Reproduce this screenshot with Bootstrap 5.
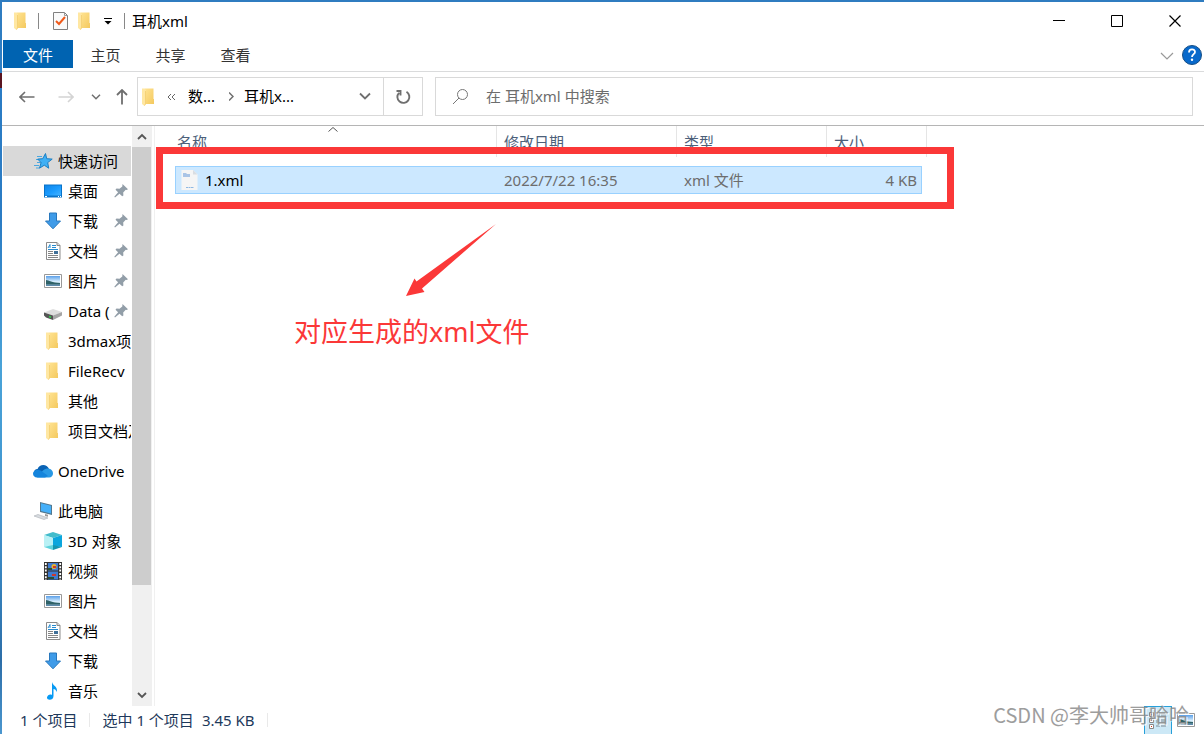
<!DOCTYPE html>
<html lang="zh-CN">
<head>
<meta charset="utf-8">
<meta name="viewport" content="width=device-width, initial-scale=1">
<title>耳机xml</title>
<link href="https://cdn.jsdelivr.net/npm/bootstrap@5.3.0/dist/css/bootstrap.min.css" rel="stylesheet">
<style>
  body { font-family: "Noto Sans", "Noto Sans CJK SC", sans-serif; font-size: 15px; line-height: 20px; color: #000;
    background: linear-gradient(#2f7cc0, #2f7fc4 10%, #5a1420 10%, #5a1420 12%, #2b7cc4 12%, #2b7cc4 30%, #4aa3d8 50%, #3f94cf 70%, #2d6ea8 90%, #4b97cf); }
  button { border: 0; background: none; padding: 0; color: inherit; }
  a { color: inherit; text-decoration: none; }
  svg { display: block; flex: none; }
  .explorer { padding: 2px 0 0 2px; }
  .explorer::before { content: ""; position: absolute; inset: 0 0 auto 0; height: 2px; background: #2f7cc0; }
  .pane { background: #fff; }
  .titlebar { height: 38px; padding-left: 7px; }
  .tool { height: 38px; width: 24px; display: flex; align-items: center; justify-content: center; }
  .tool-wide { width: 32px; }
  .tool-slim { width: 18px; }
  .tool-caret { width: 28px; }
  .rule { width: 1px; height: 16px; background: #888; margin: 0 5px; }
  .rule-end { margin: 0 7px 0 2px; }
  .sysbtn { width: 58px; height: 38px; display: flex; align-items: center; justify-content: center; }
  .ribbon { height: 32px; padding-left: 1px; border-bottom: 1px solid #dadbdc; }
  .tab { width: 65px; height: 28px; line-height: 30px; color: #333; }
  .tab-file { width: 70px; background: #0063b1; color: #fff; }
  .help { margin: 0 2px 2px 0; }
  .locbar { height: 54px; padding: 5px 11px 0 5px; border-bottom: 1px solid #b5b5b5; }
  .navbtn { width: 39px; height: 39px; display: flex; align-items: center; justify-content: center; }
  .navbtn.narrow { width: 21px; }
  .navbtn.mid { width: 31px; }
  .boxed { height: 39px; border: 1px solid #d9d9d9; }
  .address { width: 286px; padding-left: 2px; }
  .address button { line-height: 20px; padding-bottom: 2px; }
  .crumb-more { margin: 2px 12px 0 9px; }
  .crumb-next { margin: 0 10px 0 14px; }
  .address .refresh { width: 39px; height: 37px; padding: 0; border-left: 1px solid #d9d9d9; }
  .search { padding-left: 16px; margin-left: 12px; gap: 17px; }
  .search input { border: 0; outline: 0; background: none; min-width: 0; padding: 0 0 2px; }
  .search input::placeholder { color: #6d6d6d; opacity: 1; }
  .side { width: 129px; padding: 20px 0 0 1px; }
  .side a { height: 30px; padding-left: 41px; display: flex; align-items: center; gap: 6px; }
  .side a.root { padding-left: 30px; gap: 5px; }
  .side a.picked { background: #d9d9d9; }
  .side .ico { width: 18px; height: 18px; }
  .side a.root .ico { width: 20px; height: 20px; }
  .side .name { flex: 1; overflow: hidden; white-space: nowrap; }
  .side .pin { width: 14px; height: 14px; margin: 0 3px 0 -5px; }
  .spaced { margin-top: 10px; }
  .scroll { width: 20px; margin-left: 1px; background: #f0f0f0; }
  .scroll button { height: 21px; display: flex; align-items: center; justify-content: center; }
  .thumb { flex: 438; background: #cdcdcd; margin-right: 1px; }
  .rest { flex: 100; }
  .files { border-left: 1px solid #f0f0f0; margin-left: 2px; }
  .list { width: 752px; margin-left: 20px; table-layout: fixed; border-collapse: collapse; }
  .list th { height: 31px; font-weight: 400; color: #4c607a; padding: 0 0 0 7px; position: relative; vertical-align: middle; }
  .list th::after { content: ""; position: absolute; right: 0; top: 0; bottom: 0; border-right: 1px solid #e5e5e5; }
  .list th:first-child { padding-left: 2px; }
  .sort { position: absolute; left: 153px; top: 0; }
  .list td { padding: 9px 0 0; color: #6d6d6d; }
  .slot { height: 28px; background: #cce8ff; border: 1px solid #99d1ff; border-width: 1px 0; display: flex; align-items: center; padding: 0 4px 1px 7px; }
  td:first-child .slot { border-left-width: 1px; color: #000; gap: 7px; padding-left: 5px; }
  td:last-child .slot { border-right-width: 1px; justify-content: flex-end; margin-right: 5px; }
  .frame { position: absolute; left: 1px; top: 21px; width: 798px; height: 62px; border: 7px solid #fb3838; pointer-events: none; }
  .arrow { margin: 26px 0 0 245px; }
  .note { font-size: 27px; line-height: 40px; color: #fb3838; margin: 12px 0 0 139px; }
  .status { height: 28px; color: #1e395b; padding-left: 18px; }
  .status .gap { width: 1px; height: 14px; background: #e9e9e9; margin: 0 12px; }
  .view { width: 28px; height: 28px; display: flex; align-items: center; justify-content: center; }
  .view.on { background: #cce8f6; border: 1px solid #26a0da; border-bottom: 0; }
  .credit { position: absolute; right: 15px; bottom: 5px; font-size: 20px; line-height: 28px; color: #8d8d8d; text-shadow: 1px 1px 0 #fff; pointer-events: none; font-family: "Noto Sans CJK SC", sans-serif; opacity: .85; }
</style>
</head>
<body>
<svg width="0" height="0" class="position-absolute" aria-hidden="true">
  <defs>
    <linearGradient id="gf" x2="1" y2="1"><stop stop-color="#ffe391"/><stop offset="1" stop-color="#f4c95f"/></linearGradient>
    <linearGradient id="gb" x2="1" y2="1"><stop stop-color="#0f86ea"/><stop offset=".55" stop-color="#1b9cff"/><stop offset="1" stop-color="#44b2ff"/></linearGradient>
    <linearGradient id="gs" x2="0" y2="1"><stop stop-color="#5a9fe8"/><stop offset=".6" stop-color="#e1f4ff"/><stop offset="1" stop-color="#4a7ba0"/></linearGradient>
  </defs>
  <symbol id="folder" viewBox="0 0 18 18"><path d="M5 .5h8.500V11h.5v5H5z" fill="url(#gf)"/><path d="M2 .5h3l1 2.500v13l-1.500 2L2 16z" fill="#ffe7a2"/><path d="M5.500 3v13l-1 1.500" fill="none" stroke="#efc45c" stroke-width=".6"/></symbol>
  <symbol id="desktop" viewBox="0 0 18 18"><path d="M0 2.500h18v13H0z" fill="#0873c9"/><path d="M1 3.500h16v10H1z" fill="url(#gb)"/><path d="M1 14.500h2m11 0h1m1 0h1" stroke="#fff"/></symbol>
  <symbol id="down" viewBox="0 0 18 18"><path d="M5.500 1h7v8h4L9 16.800 1.500 9h4z" fill="#3f9be8" stroke="#2878bd"/></symbol>
  <symbol id="doc" viewBox="0 0 18 18"><path d="M2.500.5H13l3 3v14H2.500z" fill="#fff" stroke="#8b8b8b"/><path d="M13 .5v3h3" fill="#ddd" stroke="#8b8b8b"/><path d="m4 6 2-3.500V6" stroke="#268bd0" fill="none"/><path d="M8 3.500h4M8 5.500h4M4 7.500h10" stroke="#268bd0"/><path d="M4 9.500h5M4 11.500h5M4 13.500h10M4 15.500h10" stroke="#858585"/><path d="M10 9h4v3h-4z" fill="#3f6f98"/></symbol>
  <symbol id="pic" viewBox="0 0 18 18"><path d="M.5 2.500h17v13H.5z" fill="#fff" stroke="#999"/><path d="M2 4h14v10H2z" fill="url(#gs)"/><path d="M2 8c3 0 6 3 14 3v1.500H2z" fill="#2f6268"/></symbol>
  <symbol id="drive" viewBox="0 0 18 18"><path d="m0 10.500 9-3.500 9 3-9 3.500z" fill="#dedede"/><path d="m0 10.500 9 3V18l-7-2.500-2-2z" fill="#555"/><path d="m9 13.500 9-3.500v3.500L9 18z" fill="#a5a5a5"/><path d="m5 14.500 2 .8" stroke="#2fd34b" stroke-width="1.500"/></symbol>
  <symbol id="pinned" viewBox="0 0 14 14"><path d="M8.500 0 14 5.300l-1.500.7-.8-.2-2.500 2.800.2 2.800-1.200.9-2.700-2.600L1 13.500l-.7-.7 3.800-4.500L1.500 5.700l1-1.100 3 .2L8.300 2.400z" fill="#929ea8"/></symbol>
  <symbol id="star" viewBox="0 0 20 20"><path d="M4 5.500h5M3 8.500h4M4 11.500h4M1 14.500h5M3 17h3" stroke="#4aa7df"/><path d="m12.500 2.500 1.200 5.200 5.500.4-4.500 3.500 1 5.600-4.400-3-4.800 3 1.600-5.600-3.400-3.500 5-.4z" fill="#3fb0f5" stroke="#1b7fc4"/></symbol>
  <symbol id="cloud" viewBox="0 0 20 20"><path d="M4.500 8c2-5.500 9.500-5.500 11.500 0l-9 7H4C0 14 0 8 4.500 8" fill="#0a63b5"/><path d="M10 9.500c5-4 10-1 10 3 0 2-1.500 4-4 4H4l2-3z" fill="#2999e5"/><path d="M4 16.500c-4 0-5.500-5-2-7 4-2 7 1 13 5.500l-3 1.500z" fill="#1484dc"/></symbol>
  <symbol id="pc" viewBox="0 0 20 20"><path d="m7 1 12 3v10L7 11z" fill="#52788f"/><path d="m8 2.300 10 2.500v7.800L8 10z" fill="#45b0fa"/><path d="m12 13 3 .7v2l-3-.7z" fill="#999"/><path d="m1 15 4-1.500 10 3.500-4 1.500z" fill="#d8dce0" stroke="#b3b8bd" stroke-width=".7"/></symbol>
  <symbol id="cube" viewBox="0 0 18 18"><path d="m0 3 9-3 9 3-9 3z" fill="#43bccb"/><path d="m0 3 9 3v8l-9 1z" fill="#b9f1f5"/><path d="m9 6 9-3v12l-9-1z" fill="#0ba6dd"/><path d="m0 15 9-2v5z" fill="#5fd3dc"/><path d="m18 15-9-2v5z" fill="#1496b0"/></symbol>
  <symbol id="film" viewBox="0 0 18 18"><path d="M0 0h18v18H0z" fill="#333"/><path d="M4 1h10v7.500H4zM4 9.500h10v8H4z" fill="#3e7bd0"/><path d="M1.800 1v17M16.200 1v17" stroke="#fff" stroke-width="1.800" stroke-dasharray="2 1.300"/><circle cx="10" cy="4.500" r="2.500" fill="#e7b52d"/><path d="M4 6h4v2H4zm0 9h6v2H4z" fill="#284f35"/><path d="M9 4h3v2H9zm-1 8h4v2H8z" fill="#ca3931"/></symbol>
  <symbol id="music" viewBox="0 0 18 18"><path d="M8 0c1 4 6.500 5 4.500 10-.3-2-1.500-3-3-3v7c0 5-7 4.500-6.500 1.500.5-2.500 3-3.500 5-2.500V0z" fill="#079af4"/></symbol>
  <symbol id="check" viewBox="0 0 15 18"><path d="M.5.500h11l3 3v14H.5z" fill="#fafafa" stroke="#808080"/><path d="M11.500.5v3h3" fill="none" stroke="#999"/><path d="m3 9 3 3 6-7" fill="none" stroke="#f05a1a" stroke-width="2"/></symbol>
</svg>

<div class="explorer d-flex flex-column min-vh-100 position-relative">
  <header class="pane">
    <div class="titlebar d-flex align-items-center">
      <button class="tool" aria-label="窗口菜单"><svg width="18" height="18"><use href="#folder"/></svg></button>
      <span class="rule"></span>
      <button class="tool tool-wide" aria-label="属性"><svg width="15" height="18"><use href="#check"/></svg></button>
      <button class="tool tool-slim" aria-label="新建文件夹"><svg width="18" height="18"><use href="#folder"/></svg></button>
      <button class="tool tool-caret" aria-label="自定义快速访问工具栏"><svg width="8" height="8" viewBox="0 0 8 8"><path d="M0 1.500h8" stroke="#000"/><path d="M.5 4h7L4 7.500z"/></svg></button>
      <span class="rule rule-end"></span>
      <span>耳机xml</span>
      <button class="sysbtn ms-auto" aria-label="最小化"><svg width="12" height="12" viewBox="0 0 12 12"><path d="M0 5.500h12" stroke="#000"/></svg></button>
      <button class="sysbtn" aria-label="最大化"><svg width="12" height="12" viewBox="0 0 12 12"><path d="M.5.500h11v11H.5z" fill="none" stroke="#000"/></svg></button>
      <button class="sysbtn" aria-label="关闭"><svg width="12" height="12" viewBox="0 0 12 12"><path d="m.5.500 11 11m0-11-11 11" stroke="#000" stroke-width="1.200"/></svg></button>
    </div>
    <nav class="ribbon d-flex">
      <button class="tab tab-file">文件</button>
      <button class="tab">主页</button>
      <button class="tab">共享</button>
      <button class="tab">查看</button>
      <button class="ms-auto me-2" aria-label="展开功能区"><svg width="14" height="8" viewBox="0 0 14 8"><path d="m1 1 6 6 6-6" fill="none" stroke="#999" stroke-width="1.200"/></svg></button>
      <button class="help" aria-label="帮助"><svg width="20" height="20" viewBox="0 0 20 20"><circle cx="10" cy="10" r="9.500" fill="#0869cb" stroke="#174f86"/><path d="M7 7.500c0-4 6-4 6-.5 0 2-3 2.500-3 5" fill="none" stroke="#fff" stroke-width="1.800"/><circle cx="10" cy="14.700" r="1.200" fill="#fff"/></svg></button>
    </nav>
    <div class="locbar d-flex">
      <button class="navbtn" aria-label="后退"><svg width="16" height="12" viewBox="0 0 16 12"><path d="M15.500 6H1m5-5L1 6l5 5" fill="none" stroke="#6f6f6f" stroke-width="1.600"/></svg></button>
      <button class="navbtn" aria-label="前进"><svg width="16" height="12" viewBox="0 0 16 12"><path d="M.5 6H15m-5-5 5 5-5 5" fill="none" stroke="#d4d4d4" stroke-width="1.600"/></svg></button>
      <button class="navbtn narrow" aria-label="最近位置"><svg width="10" height="6" viewBox="0 0 10 6"><path d="m1 .8 4 4 4-4" fill="none" stroke="#6f6f6f" stroke-width="1.500"/></svg></button>
      <button class="navbtn mid" aria-label="上移"><svg width="12" height="16" viewBox="0 0 12 16"><path d="M6 15.500V1M1 6l5-5 5 5" fill="none" stroke="#6f6f6f" stroke-width="1.800"/></svg></button>
      <div class="boxed address d-flex align-items-center">
        <svg width="18" height="18"><use href="#folder"/></svg>
        <button class="crumb-more" aria-label="更多"><svg width="9" height="8" viewBox="0 0 9 8"><path d="M4 1 1 4l3 3m4-6L5 4l3 3" fill="none" stroke="#666"/></svg></button>
        <button>数...</button>
        <svg class="crumb-next" width="5" height="9" viewBox="0 0 5 9"><path d="m0 .5 4 4-4 4" fill="none" stroke="#6f6f6f" stroke-width="1.500"/></svg>
        <button>耳机x...</button>
        <button class="ms-auto me-2 px-1" aria-label="历史地址"><svg width="12" height="8" viewBox="0 0 12 8"><path d="m1 1.500 5 5 5-5" fill="none" stroke="#6f6f6f" stroke-width="1.800"/></svg></button>
        <button class="refresh d-flex align-items-center justify-content-center" aria-label="刷新"><svg width="16" height="16" viewBox="0 0 16 16"><path d="M11.500 2.800A6 6 0 1 1 4 3.800M1.500 2h4v4.500" fill="none" stroke="#6f6f6f" stroke-width="1.900"/></svg></button>
      </div>
      <label class="boxed search d-flex align-items-center flex-grow-1">
        <svg width="17" height="17" viewBox="0 0 17 17"><circle cx="10.500" cy="6.500" r="5" fill="none" stroke="#777"/><path d="m7 10-6 6" stroke="#777"/></svg>
        <input class="flex-grow-1" type="search" placeholder="在 耳机xml 中搜索" aria-label="搜索">
      </label>
    </div>
  </header>

  <main class="pane d-flex flex-grow-1">
    <nav class="side flex-shrink-0" aria-label="导航窗格">
      <a href="#" class="root picked"><svg class="ico"><use href="#star"/></svg><span class="name">快速访问</span></a>
      <a href="#"><svg class="ico"><use href="#desktop"/></svg><span class="name">桌面</span><svg class="pin"><use href="#pinned"/></svg></a>
      <a href="#"><svg class="ico"><use href="#down"/></svg><span class="name">下载</span><svg class="pin"><use href="#pinned"/></svg></a>
      <a href="#"><svg class="ico"><use href="#doc"/></svg><span class="name">文档</span><svg class="pin"><use href="#pinned"/></svg></a>
      <a href="#"><svg class="ico"><use href="#pic"/></svg><span class="name">图片</span><svg class="pin"><use href="#pinned"/></svg></a>
      <a href="#"><svg class="ico"><use href="#drive"/></svg><span class="name">Data (</span><svg class="pin"><use href="#pinned"/></svg></a>
      <a href="#"><svg class="ico"><use href="#folder"/></svg><span class="name">3dmax项</span></a>
      <a href="#"><svg class="ico"><use href="#folder"/></svg><span class="name">FileRecv</span></a>
      <a href="#"><svg class="ico"><use href="#folder"/></svg><span class="name">其他</span></a>
      <a href="#"><svg class="ico"><use href="#folder"/></svg><span class="name">项目文档及</span></a>
      <a href="#" class="root spaced"><svg class="ico"><use href="#cloud"/></svg><span class="name">OneDrive</span></a>
      <a href="#" class="root spaced"><svg class="ico"><use href="#pc"/></svg><span class="name">此电脑</span></a>
      <a href="#"><svg class="ico"><use href="#cube"/></svg><span class="name">3D 对象</span></a>
      <a href="#"><svg class="ico"><use href="#film"/></svg><span class="name">视频</span></a>
      <a href="#"><svg class="ico"><use href="#pic"/></svg><span class="name">图片</span></a>
      <a href="#"><svg class="ico"><use href="#doc"/></svg><span class="name">文档</span></a>
      <a href="#"><svg class="ico"><use href="#down"/></svg><span class="name">下载</span></a>
      <a href="#"><svg class="ico"><use href="#music"/></svg><span class="name">音乐</span></a>
    </nav>
    <div class="scroll d-flex flex-column flex-shrink-0">
      <button aria-label="向上滚动"><svg width="10" height="7" viewBox="0 0 10 7"><path d="m1 6 4-4 4 4" fill="none" stroke="#555" stroke-width="1.800"/></svg></button>
      <div class="thumb"></div>
      <div class="rest"></div>
      <button aria-label="向下滚动"><svg width="10" height="7" viewBox="0 0 10 7"><path d="m1 1 4 4 4-4" fill="none" stroke="#555" stroke-width="1.800"/></svg></button>
    </div>
    <section class="files flex-grow-1 position-relative">
      <table class="list">
        <colgroup><col width="322"><col width="180"><col width="150"><col width="100"></colgroup>
        <thead><tr>
          <th>名称<svg class="sort" width="10" height="7" viewBox="0 0 10 7"><path d="m.5 5.500 4.500-4 4.500 4" fill="none" stroke="#555"/></svg></th>
          <th>修改日期</th><th>类型</th><th>大小</th>
        </tr></thead>
        <tbody><tr>
          <td><div class="slot"><svg width="17" height="20" viewBox="0 0 17 20"><path d="M.5 0H12l4.500 4.500V20H.5z" fill="#f5f5f5"/><path d="M12 0v4.500h4.500z" fill="#d9dde2"/><path d="M2 3h3l1 1h3v3H2z" fill="#a9c4e6"/><path d="M5 17.500h8" stroke="#8fb8e2" stroke-dasharray="2 .5"/></svg><span>1.xml</span></div></td>
          <td><div class="slot">2022/7/22 16:35</div></td>
          <td><div class="slot">xml 文件</div></td>
          <td><div class="slot">4 KB</div></td>
        </tr></tbody>
      </table>
      <div class="frame"></div>
      <svg class="arrow" width="100" height="80" viewBox="0 0 100 80"><path d="m6 76 8.500-17.500 2 3L96 4 22 68.500l2.500 3.500z" fill="#fb3838"/></svg>
      <p class="note mb-0">对应生成的xml文件</p>
    </section>
  </main>

  <footer class="pane status d-flex align-items-center">
    <span>1 个项目</span><span class="gap"></span><span>选中 1 个项目</span><span class="ms-2">3.45 KB</span><span class="gap"></span>
    <button class="view on ms-auto" aria-label="详细信息"><svg width="18" height="18" viewBox="0 0 18 18"><path d="M.5.500h4v4h-4zm0 6h4v4h-4zm0 6h4v4h-4z" fill="#fff" stroke="#888"/><path d="M2 2h1v1H2z" fill="#3a6ea5"/><path d="M2 8h1v1H2zm0 6h1v1H2z" fill="#d43a1c"/><path d="M7 2h4m1 0h5M7 4h4m1 0h5M7 8h4m1 0h5m-10 2h4m1 0h5M7 14h4m1 0h5" stroke="#808a92"/></svg></button>
    <button class="view me-1" aria-label="大图标"><svg width="18" height="18"><use href="#pic"/></svg></button>
  </footer>
  <div class="credit">CSDN @李大帅哥哈哈</div>
</div>
<script src="https://cdn.jsdelivr.net/npm/bootstrap@5.3.0/dist/js/bootstrap.bundle.min.js"></script>
</body>
</html>
